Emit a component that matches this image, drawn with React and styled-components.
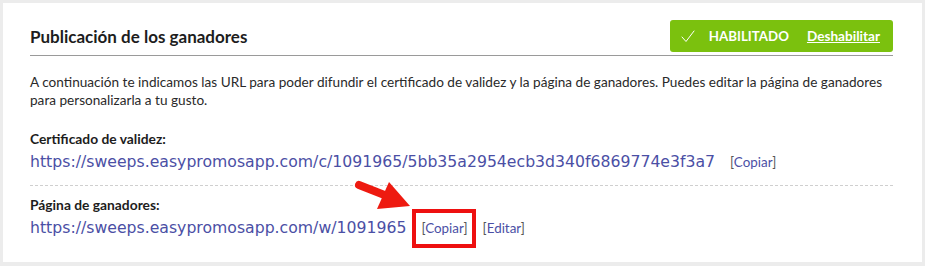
import styled, { createGlobalStyle } from 'styled-components';

const GlobalStyle = createGlobalStyle`
  html, body {
    margin: 0;
    padding: 0;
    background: #ececec;
  }
  body {
    font-family: 'Lato', 'Noto Sans', sans-serif;
    color: #222;
  }
`;

const Page = styled.div`
  padding: 3px;
  width: 925px;
  height: 266px;
  box-sizing: border-box;
`;

const Card = styled.div`
  background: #fff;
  height: 259px;
  padding: 17px 29px 0 27px;
  box-sizing: border-box;
`;

const Header = styled.div`
  display: flex;
  align-items: center;
  justify-content: space-between;
  border-bottom: 1px solid #9a9a9a;
  padding-bottom: 3px;
`;

const Title = styled.h2`
  margin: 0;
  font-size: 17px;
  font-weight: 700;
  color: #1d1d1d;
`;

const StatusBar = styled.div`
  display: flex;
  align-items: center;
  height: 32px;
  padding: 0 13px 0 11px;
  background: #7bc10e;
  border-radius: 3px;
  color: #fff;
  font-weight: 700;
  font-size: 13.3px;
`;

const StatusLabel = styled.span`
  margin: 0 18px 0 14px;
`;

const ToggleLink = styled.a`
  color: #fff;
  text-decoration: underline;
  font-size: 13.6px;
  cursor: pointer;
`;

const Intro = styled.p`
  margin: 17px 0 0;
  font-size: 13.6px;
  line-height: 18px;
  color: #2a2a2a;
`;

const Block = styled.div`
  padding: ${(p) => (p.$first ? '21px 0 12px' : '10px 0 0')};
  border-bottom: ${(p) => (p.$first ? '1px dashed #cfcfcf' : 'none')};
`;

const Label = styled.div`
  font-size: 13.8px;
  font-weight: 700;
  line-height: 18px;
  color: #1d1d1d;
`;

const UrlRow = styled.div`
  display: flex;
  align-items: baseline;
  height: 22px;
  line-height: 22px;
  margin-top: 3px;
  gap: 15px;
`;

const Url = styled.a`
  font-family: 'DejaVu Sans', sans-serif;
  font-size: 15.7px;
  color: #4b4fa5;
  text-decoration: none;
`;

const Action = styled.span`
  position: relative;
  font-size: 13.4px;
  color: #555;
  ${(p) =>
    p.$marked &&
    `
    &::after {
      content: '';
      position: absolute;
      left: -9px;
      right: -8px;
      top: -8px;
      bottom: -9px;
      border: 4px solid #ee1010;
    }
  `}
`;

const ActionLink = styled.a`
  color: #4b4fa5;
  text-decoration: none;
`;

const ArrowIcon = styled.svg`
  position: absolute;
  left: -67px;
  top: -38px;
  overflow: visible;
`;

const Bracketed = ({ children, marked, arrow }) => (
  <Action $marked={marked}>
    {arrow && (
      <ArrowIcon width="60" height="32" viewBox="0 0 60 32">
        <path d="M5 6 L33 17" stroke="#ee1a10" strokeWidth="8" strokeLinecap="round" />
        <path d="M35 3 L56 27 L23 30 Z" fill="#ee1a10" />
      </ArrowIcon>
    )}
    [<ActionLink>{children}</ActionLink>]
  </Action>
);

const CheckIcon = () => (
  <svg width="14" height="13" viewBox="0 0 14 13" fill="none">
    <path d="M1 7 L5 11.5 L13 1" stroke="#fff" strokeWidth="1" strokeLinecap="round" />
  </svg>
);

export default function App() {
  return (
    <>
      <GlobalStyle />
      <Page>
        <Card>
          <Header>
            <Title>Publicación de los ganadores</Title>
            <StatusBar>
              <CheckIcon />
              <StatusLabel>HABILITADO</StatusLabel>
              <ToggleLink>Deshabilitar</ToggleLink>
            </StatusBar>
          </Header>
          <Intro>
            A continuación te indicamos las URL para poder difundir el certificado de validez y la página de ganadores. Puedes editar la página de ganadores para personalizarla a tu gusto.
          </Intro>
          <Block $first>
            <Label>Certificado de validez:</Label>
            <UrlRow>
              <Url>https://sweeps.easypromosapp.com/c/1091965/5bb35a2954ecb3d340f6869774e3f3a7</Url>
              <Bracketed>Copiar</Bracketed>
            </UrlRow>
          </Block>
          <Block>
            <Label>Página de ganadores:</Label>
            <UrlRow>
              <Url>https://sweeps.easypromosapp.com/w/1091965</Url>
              <Bracketed marked arrow>Copiar</Bracketed>
              <Bracketed>Editar</Bracketed>
            </UrlRow>
          </Block>
        </Card>
      </Page>
    </>
  );
}
